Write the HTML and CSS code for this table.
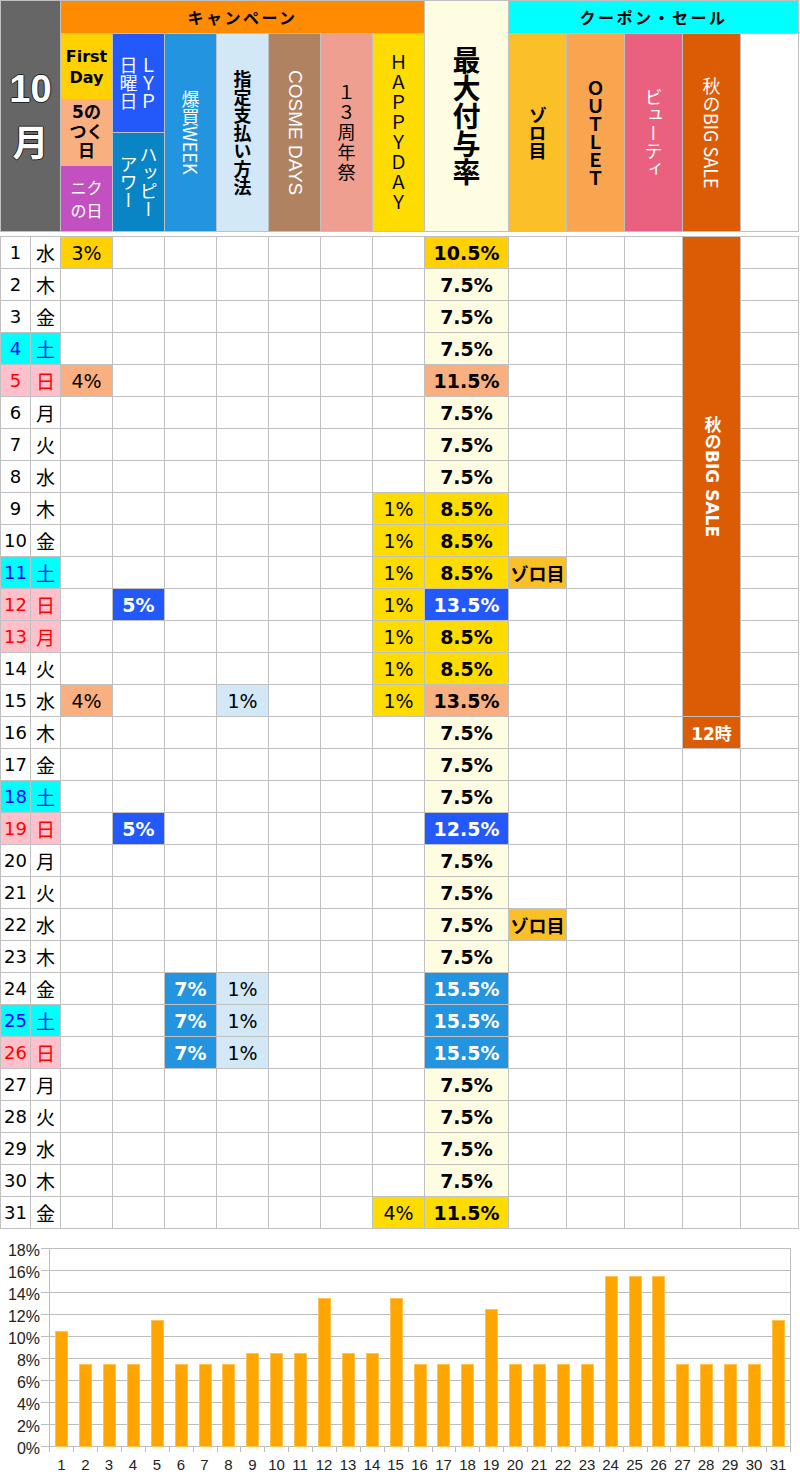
FILE: index.html
```html
<!DOCTYPE html>
<html lang="ja">
<head>
<meta charset="utf-8">
<title>10月 ポイント付与率</title>
<link rel="stylesheet" href="styles.css">
</head>
<body>
<div class="sheet">
  <div class="head">
    <div class="month"><span class="m10">10</span><span class="mtsuki">月</span></div>
    <div class="camp">キャンペーン</div>
    <div class="maxh"><span class="v">最大付与率</span></div>
    <div class="coup">クーポン・セール</div>
    <div class="h-first">First<br>Day</div>
    <div class="h-five">5の<br>つく<br>日</div>
    <div class="h-niku"><span class="ln">ニク</span><span class="ln">の日</span></div>
    <div class="h-lyp"><span class="v up">ＬＹＰ<br>日曜日</span></div>
    <div class="h-hh"><span class="v">ハッピー<br>アワー</span></div>
    <div class="h-bk"><span class="v">爆買WEEK</span></div>
    <div class="h-sh"><span class="v">指定支払い方法</span></div>
    <div class="h-cosme"><span class="v">COSME DAYS</span></div>
    <div class="h-13"><span class="v up">１３周年祭</span></div>
    <div class="h-hd"><span class="v up">ＨＡＰＰＹＤＡＹ</span></div>
    <div class="h-zoro"><span class="v">ゾロ目</span></div>
    <div class="h-out"><span class="v up">ＯＵＴＬＥＴ</span></div>
    <div class="h-beauty"><span class="v">ビューティ</span></div>
    <div class="h-aki"><span class="v">秋のBIG SALE</span></div>
    <div class="h-blank"></div>
  </div>

  <div class="grid">
    <div class="aki"><span class="v">秋のBIG SALE</span></div>

    <div class="d">1</div><div class="w">水</div><div class="fy">3%</div><div></div><div></div><div></div><div></div><div></div><div></div><div class="mx my">10.5%</div><div></div><div></div><div></div><div></div>
    <div class="d">2</div><div class="w">木</div><div></div><div></div><div></div><div></div><div></div><div></div><div></div><div class="mx">7.5%</div><div></div><div></div><div></div><div></div>
    <div class="d">3</div><div class="w">金</div><div></div><div></div><div></div><div></div><div></div><div></div><div></div><div class="mx">7.5%</div><div></div><div></div><div></div><div></div>
    <div class="d sa">4</div><div class="w sa">土</div><div></div><div></div><div></div><div></div><div></div><div></div><div></div><div class="mx">7.5%</div><div></div><div></div><div></div><div></div>
    <div class="d su">5</div><div class="w su">日</div><div class="fs">4%</div><div></div><div></div><div></div><div></div><div></div><div></div><div class="mx ms">11.5%</div><div></div><div></div><div></div><div></div>
    <div class="d">6</div><div class="w">月</div><div></div><div></div><div></div><div></div><div></div><div></div><div></div><div class="mx">7.5%</div><div></div><div></div><div></div><div></div>
    <div class="d">7</div><div class="w">火</div><div></div><div></div><div></div><div></div><div></div><div></div><div></div><div class="mx">7.5%</div><div></div><div></div><div></div><div></div>
    <div class="d">8</div><div class="w">水</div><div></div><div></div><div></div><div></div><div></div><div></div><div></div><div class="mx">7.5%</div><div></div><div></div><div></div><div></div>
    <div class="d">9</div><div class="w">木</div><div></div><div></div><div></div><div></div><div></div><div></div><div class="hd">1%</div><div class="mx mh">8.5%</div><div></div><div></div><div></div><div></div>
    <div class="d">10</div><div class="w">金</div><div></div><div></div><div></div><div></div><div></div><div></div><div class="hd">1%</div><div class="mx mh">8.5%</div><div></div><div></div><div></div><div></div>
    <div class="d sa">11</div><div class="w sa">土</div><div></div><div></div><div></div><div></div><div></div><div></div><div class="hd">1%</div><div class="mx mh">8.5%</div><div class="zr">ゾロ目</div><div></div><div></div><div></div>
    <div class="d su">12</div><div class="w su">日</div><div></div><div class="lp">5%</div><div></div><div></div><div></div><div></div><div class="hd">1%</div><div class="mx mb">13.5%</div><div></div><div></div><div></div><div></div>
    <div class="d su">13</div><div class="w su">月</div><div></div><div></div><div></div><div></div><div></div><div></div><div class="hd">1%</div><div class="mx mh">8.5%</div><div></div><div></div><div></div><div></div>
    <div class="d">14</div><div class="w">火</div><div></div><div></div><div></div><div></div><div></div><div></div><div class="hd">1%</div><div class="mx mh">8.5%</div><div></div><div></div><div></div><div></div>
    <div class="d">15</div><div class="w">水</div><div class="fs">4%</div><div></div><div></div><div class="sh">1%</div><div></div><div></div><div class="hd">1%</div><div class="mx ms">13.5%</div><div></div><div></div><div></div><div></div>
    <div class="d">16</div><div class="w">木</div><div></div><div></div><div></div><div></div><div></div><div></div><div></div><div class="mx">7.5%</div><div></div><div></div><div></div><div class="t12">12時</div><div></div>
    <div class="d">17</div><div class="w">金</div><div></div><div></div><div></div><div></div><div></div><div></div><div></div><div class="mx">7.5%</div><div></div><div></div><div></div><div></div><div></div>
    <div class="d sa">18</div><div class="w sa">土</div><div></div><div></div><div></div><div></div><div></div><div></div><div></div><div class="mx">7.5%</div><div></div><div></div><div></div><div></div><div></div>
    <div class="d su">19</div><div class="w su">日</div><div></div><div class="lp">5%</div><div></div><div></div><div></div><div></div><div></div><div class="mx mb">12.5%</div><div></div><div></div><div></div><div></div><div></div>
    <div class="d">20</div><div class="w">月</div><div></div><div></div><div></div><div></div><div></div><div></div><div></div><div class="mx">7.5%</div><div></div><div></div><div></div><div></div><div></div>
    <div class="d">21</div><div class="w">火</div><div></div><div></div><div></div><div></div><div></div><div></div><div></div><div class="mx">7.5%</div><div></div><div></div><div></div><div></div><div></div>
    <div class="d">22</div><div class="w">水</div><div></div><div></div><div></div><div></div><div></div><div></div><div></div><div class="mx">7.5%</div><div class="zr">ゾロ目</div><div></div><div></div><div></div><div></div>
    <div class="d">23</div><div class="w">木</div><div></div><div></div><div></div><div></div><div></div><div></div><div></div><div class="mx">7.5%</div><div></div><div></div><div></div><div></div><div></div>
    <div class="d">24</div><div class="w">金</div><div></div><div></div><div class="bk">7%</div><div class="sh">1%</div><div></div><div></div><div></div><div class="mx mk">15.5%</div><div></div><div></div><div></div><div></div><div></div>
    <div class="d sa">25</div><div class="w sa">土</div><div></div><div></div><div class="bk">7%</div><div class="sh">1%</div><div></div><div></div><div></div><div class="mx mk">15.5%</div><div></div><div></div><div></div><div></div><div></div>
    <div class="d su">26</div><div class="w su">日</div><div></div><div></div><div class="bk">7%</div><div class="sh">1%</div><div></div><div></div><div></div><div class="mx mk">15.5%</div><div></div><div></div><div></div><div></div><div></div>
    <div class="d">27</div><div class="w">月</div><div></div><div></div><div></div><div></div><div></div><div></div><div></div><div class="mx">7.5%</div><div></div><div></div><div></div><div></div><div></div>
    <div class="d">28</div><div class="w">火</div><div></div><div></div><div></div><div></div><div></div><div></div><div></div><div class="mx">7.5%</div><div></div><div></div><div></div><div></div><div></div>
    <div class="d">29</div><div class="w">水</div><div></div><div></div><div></div><div></div><div></div><div></div><div></div><div class="mx">7.5%</div><div></div><div></div><div></div><div></div><div></div>
    <div class="d">30</div><div class="w">木</div><div></div><div></div><div></div><div></div><div></div><div></div><div></div><div class="mx">7.5%</div><div></div><div></div><div></div><div></div><div></div>
    <div class="d">31</div><div class="w">金</div><div></div><div></div><div></div><div></div><div></div><div></div><div class="hd">4%</div><div class="mx mh">11.5%</div><div></div><div></div><div></div><div></div><div></div>
  </div>

  <svg class="chart" width="800" height="251" viewBox="0 1229 800 251" xmlns="http://www.w3.org/2000/svg">
    <g stroke="#bdbdbd" stroke-width="1" fill="none">
      <path d="M41 1248.5H790.5M41 1270.5H790.5M41 1292.5H790.5M41 1314.5H790.5M41 1336.5H790.5M41 1358.5H790.5M41 1380.5H790.5M41 1402.5H790.5M41 1424.5H790.5M41 1446.5H790.5"/>
      <path d="M49.5 1248.5V1452M790.5 1248.5V1452"/>
      <path d="M73.5 1446.5V1452M97.5 1446.5V1452M121.5 1446.5V1452M145.5 1446.5V1452M169.5 1446.5V1452M193.5 1446.5V1452M217.5 1446.5V1452M240.5 1446.5V1452M264.5 1446.5V1452M288.5 1446.5V1452M312.5 1446.5V1452M336.5 1446.5V1452M360.5 1446.5V1452M384.5 1446.5V1452M408.5 1446.5V1452M432.5 1446.5V1452M455.5 1446.5V1452M479.5 1446.5V1452M503.5 1446.5V1452M527.5 1446.5V1452M551.5 1446.5V1452M575.5 1446.5V1452M599.5 1446.5V1452M623.5 1446.5V1452M647.5 1446.5V1452M670.5 1446.5V1452M694.5 1446.5V1452M718.5 1446.5V1452M742.5 1446.5V1452M766.5 1446.5V1452"/>
    </g>
    <g fill="#ffa500" stroke="#ffc24f" stroke-width="1">
      <rect x="55.5" y="1331.5" width="12" height="115"/>
      <rect x="79.5" y="1364.5" width="12" height="82"/>
      <rect x="103.5" y="1364.5" width="12" height="82"/>
      <rect x="127.5" y="1364.5" width="12" height="82"/>
      <rect x="151.5" y="1320.5" width="12" height="126"/>
      <rect x="175.5" y="1364.5" width="12" height="82"/>
      <rect x="199.5" y="1364.5" width="12" height="82"/>
      <rect x="222.5" y="1364.5" width="12" height="82"/>
      <rect x="246.5" y="1353.5" width="12" height="93"/>
      <rect x="270.5" y="1353.5" width="12" height="93"/>
      <rect x="294.5" y="1353.5" width="12" height="93"/>
      <rect x="318.5" y="1298.5" width="12" height="148"/>
      <rect x="342.5" y="1353.5" width="12" height="93"/>
      <rect x="366.5" y="1353.5" width="12" height="93"/>
      <rect x="390.5" y="1298.5" width="12" height="148"/>
      <rect x="414.5" y="1364.5" width="12" height="82"/>
      <rect x="437.5" y="1364.5" width="12" height="82"/>
      <rect x="461.5" y="1364.5" width="12" height="82"/>
      <rect x="485.5" y="1309.5" width="12" height="137"/>
      <rect x="509.5" y="1364.5" width="12" height="82"/>
      <rect x="533.5" y="1364.5" width="12" height="82"/>
      <rect x="557.5" y="1364.5" width="12" height="82"/>
      <rect x="581.5" y="1364.5" width="12" height="82"/>
      <rect x="605.5" y="1276.5" width="12" height="170"/>
      <rect x="629.5" y="1276.5" width="12" height="170"/>
      <rect x="652.5" y="1276.5" width="12" height="170"/>
      <rect x="676.5" y="1364.5" width="12" height="82"/>
      <rect x="700.5" y="1364.5" width="12" height="82"/>
      <rect x="724.5" y="1364.5" width="12" height="82"/>
      <rect x="748.5" y="1364.5" width="12" height="82"/>
      <rect x="772.5" y="1320.5" width="12" height="126"/>
    </g>
    <g class="ylab" text-anchor="end">
      <text x="40" y="1256">18%</text>
      <text x="40" y="1278">16%</text>
      <text x="40" y="1300">14%</text>
      <text x="40" y="1322">12%</text>
      <text x="40" y="1344">10%</text>
      <text x="40" y="1366">8%</text>
      <text x="40" y="1388">6%</text>
      <text x="40" y="1410">4%</text>
      <text x="40" y="1432">2%</text>
      <text x="40" y="1454">0%</text>
    </g>
    <g class="xlab" text-anchor="middle">
      <text x="61.5" y="1470">1</text>
      <text x="85.5" y="1470">2</text>
      <text x="109" y="1470">3</text>
      <text x="133" y="1470">4</text>
      <text x="157" y="1470">5</text>
      <text x="181" y="1470">6</text>
      <text x="204.5" y="1470">7</text>
      <text x="228.5" y="1470">8</text>
      <text x="252.5" y="1470">9</text>
      <text x="276.5" y="1470">10</text>
      <text x="300" y="1470">11</text>
      <text x="324" y="1470">12</text>
      <text x="348" y="1470">13</text>
      <text x="372" y="1470">14</text>
      <text x="395.5" y="1470">15</text>
      <text x="419.5" y="1470">16</text>
      <text x="443.5" y="1470">17</text>
      <text x="467.5" y="1470">18</text>
      <text x="491" y="1470">19</text>
      <text x="515" y="1470">20</text>
      <text x="539" y="1470">21</text>
      <text x="563" y="1470">22</text>
      <text x="587" y="1470">23</text>
      <text x="610.5" y="1470">24</text>
      <text x="634.5" y="1470">25</text>
      <text x="658.5" y="1470">26</text>
      <text x="682.5" y="1470">27</text>
      <text x="706" y="1470">28</text>
      <text x="730" y="1470">29</text>
      <text x="754" y="1470">30</text>
      <text x="778" y="1470">31</text>
    </g>
  </svg>
</div>
</body>
</html>
```

FILE: styles.css
```css
* { box-sizing: border-box; }

body {
  margin: 0;
  background: #fff;
  color: #000;
  font-family: "DejaVu Sans", "Noto Sans CJK JP", sans-serif;
}

.sheet { width: 800px; }

.head,
.grid {
  display: grid;
  grid-template-columns: 29px 29px repeat(7, 51px) 83px repeat(5, 57px);
  gap: 1px;
  padding: 1px;
  width: 799px;
  background: #c0c0c0;
}

.head { grid-template-rows: 32px 65px 32px 32px 65px; }

.grid {
  grid-auto-rows: 31px;
  margin-top: 4px;
}

.head > div,
.grid > div {
  background: #fff;
  display: flex;
  align-items: center;
  justify-content: center;
  text-align: center;
  overflow: hidden;
}

.v {
  writing-mode: vertical-rl;
  text-align: center;
  font-family: "Noto Sans CJK JP", sans-serif;
  font-size: 18px;
  line-height: 20px;
}
.up { text-orientation: upright; }

/* ---------- header ---------- */
.month {
  grid-column: 1 / 3;
  grid-row: 1 / 6;
  flex-direction: column;
  background: #666 !important;
  color: #fff;
  font-weight: bold;
  text-shadow: 1px 0 0 #222, -1px 0 0 #222, 0 1px 0 #222, 0 -1px 0 #222;
}
.m10 {
  font-family: "Liberation Sans", sans-serif;
  font-size: 38px;
  line-height: 44px;
}
.mtsuki {
  font-family: "Noto Sans CJK JP", sans-serif;
  font-size: 36px;
  line-height: 50px;
  margin-top: 4px;
}

.camp,
.coup {
  grid-row: 1;
  font-family: "Noto Sans CJK JP", sans-serif;
  font-weight: bold;
  font-size: 16px;
  letter-spacing: 2.5px;
}
.camp { grid-column: 3 / 10; background: #ff8c00 !important; }
.coup { grid-column: 11 / 16; background: #00ffff !important; }

.maxh {
  grid-column: 10;
  grid-row: 1 / 6;
  background: #fffde1 !important;
}
.maxh .v { font-size: 28px; line-height: 30px; font-weight: bold; }

.h-first {
  grid-column: 3; grid-row: 2;
  background: #ffd100 !important;
  font-weight: bold;
  font-size: 16px;
  line-height: 21px;
}
.h-five {
  grid-column: 3; grid-row: 3 / 5;
  background: #f9af7f !important;
  font-weight: bold;
  font-size: 17px;
  line-height: 19.5px;
}
.h-niku {
  grid-column: 3; grid-row: 5;
  flex-direction: column;
  background: #c350c0 !important;
  color: #fff;
  font-family: "Noto Sans CJK JP", sans-serif;
  font-size: 16px;
}
.ln { display: block; line-height: 23px; }
.h-lyp { grid-column: 4; grid-row: 2 / 4; background: #2358fb !important; color: #fff; }
.h-hh { grid-column: 4; grid-row: 4 / 6; background: #0984c4 !important; color: #fff; }
.h-bk { grid-column: 5; grid-row: 2 / 6; background: #2394e0 !important; color: #fff; }
.h-sh { grid-column: 6; grid-row: 2 / 6; background: #d2e8f6 !important; }
.h-sh .v { font-weight: bold; }
.h-cosme { grid-column: 7; grid-row: 2 / 6; background: #b08262 !important; color: #fff; }
.h-cosme .v { font-family: "Liberation Sans", sans-serif; font-size: 19px; }
.h-13 { grid-column: 8; grid-row: 2 / 6; background: #ee9f8f !important; }
.h-13 .v { letter-spacing: 2px; }
.h-hd { grid-column: 9; grid-row: 2 / 6; background: #fedc00 !important; }
.h-hd .v { letter-spacing: 2px; }
.h-zoro { grid-column: 11; grid-row: 2 / 6; background: #fbbf27 !important; }
.h-zoro .v { font-weight: bold; }
.h-out { grid-column: 12; grid-row: 2 / 6; background: #f9a550 !important; }
.h-out .v { font-weight: bold; }
.h-beauty { grid-column: 13; grid-row: 2 / 6; background: #e9617f !important; color: #fff; }
.h-aki { grid-column: 14; grid-row: 2 / 6; background: #dc5c05 !important; color: #fff; }
.h-blank { grid-column: 15; grid-row: 2 / 6; }

/* ---------- body ---------- */
.grid > div { font-size: 19px; }

.d { font-size: 18px !important; }
.w { font-family: "Noto Sans CJK JP", sans-serif; font-size: 19px !important; }
.sa { background: #00ffff !important; color: #0000ff; }
.su { background: #ffc0cb !important; color: #ff0000; }

.fy { background: #ffd100 !important; }
.fs { background: #f9af7f !important; }
.hd { background: #fedc00 !important; }
.sh { background: #d2e8f6 !important; }
.lp { background: #2358fb !important; color: #fff; font-weight: bold; }
.bk { background: #2394e0 !important; color: #fff; font-weight: bold; }

.mx { background: #fffde1 !important; font-weight: bold; }
.my { background: #ffd100 !important; }
.mh { background: #fedc00 !important; }
.ms { background: #f9af7f !important; }
.mb { background: #2358fb !important; color: #fff; }
.mk { background: #2394e0 !important; color: #fff; }

.zr {
  background: #fbbf27 !important;
  font-family: "Noto Sans CJK JP", sans-serif;
  font-weight: bold;
  font-size: 18px !important;
}

.aki {
  grid-column: 14;
  grid-row: 1 / span 15;
  background: #dc5c05 !important;
  color: #fff;
}
.aki .v { font-weight: bold; font-family: "DejaVu Sans", "Noto Sans CJK JP", sans-serif; font-size: 17px; }

.t12 {
  background: #dc5c05 !important;
  color: #fff;
  font-weight: bold;
  font-size: 17px !important;
}

/* ---------- chart ---------- */
.chart { display: block; }
.ylab { font-family: "Liberation Sans", sans-serif; font-size: 16px; fill: #222; }
.xlab { font-family: "Liberation Sans", sans-serif; font-size: 15px; fill: #222; }
```
